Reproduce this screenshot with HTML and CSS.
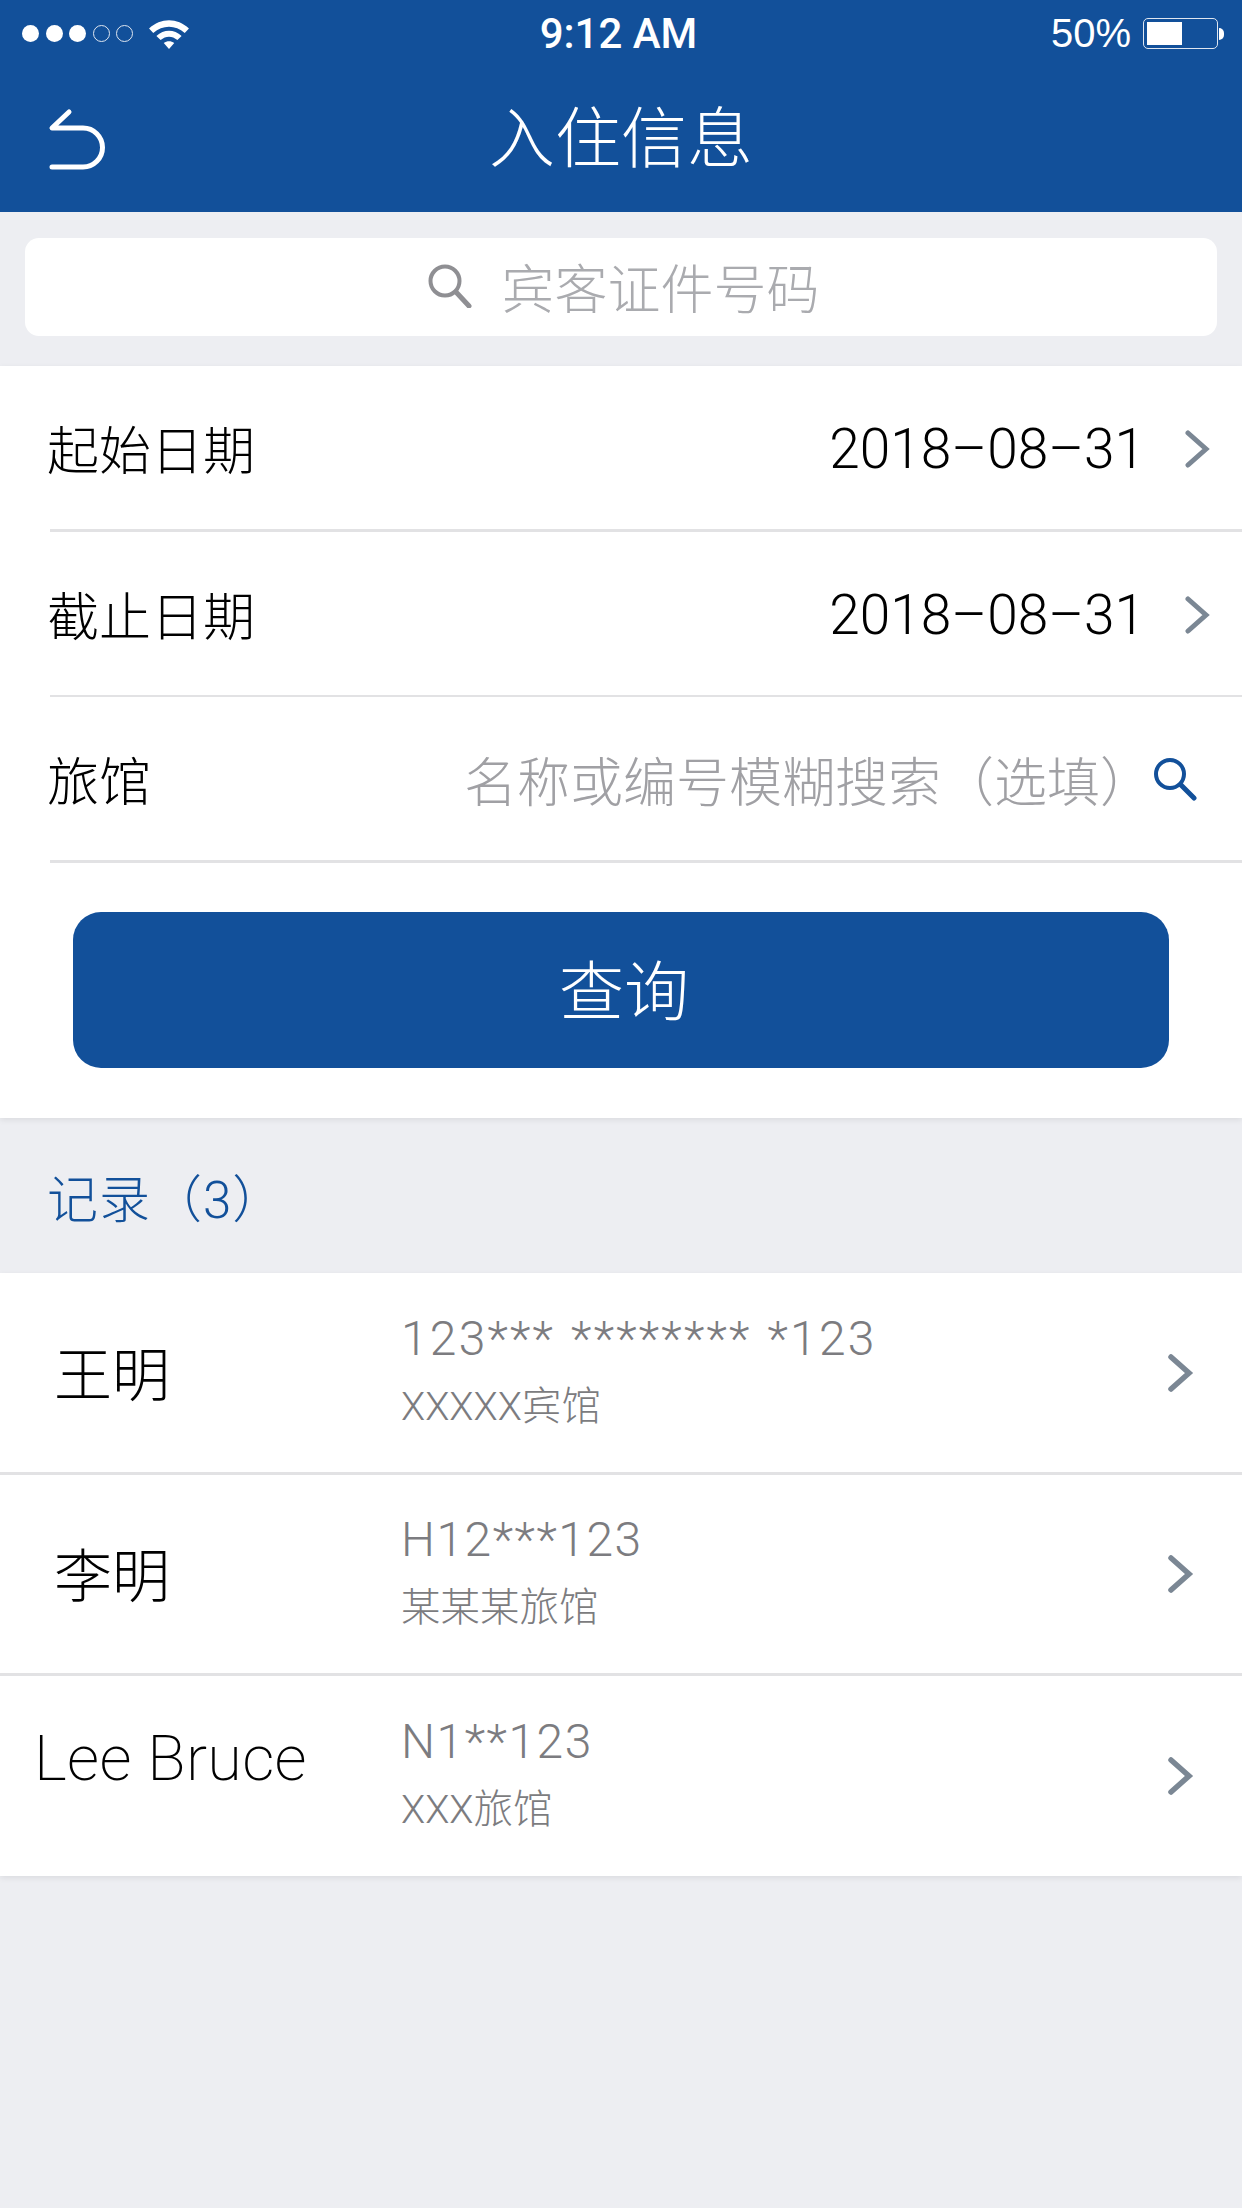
FILE: index.html
```html
<!DOCTYPE html>
<html lang="zh-CN">
<head>
    <meta charset="UTF-8">
    <meta name="viewport" content="width=device-width, initial-scale=1.0">
    <title>入住信息</title>
    <link rel="stylesheet" href="styles.css">
</head>
<body>
    <header class="top">
        <div class="status">
            <div class="status-left">
                <span class="dot"></span><span class="dot"></span><span class="dot"></span>
                <span class="dot empty"></span><span class="dot empty"></span>
                <svg class="wifi" width="42" height="30" viewBox="0 0 40 30" preserveAspectRatio="none">
                    <path d="M1 9.5C12 -1.5 28 -1.5 39 9.5L35 14C26 5.5 14 5.5 5 14Z" fill="#fff"/>
                    <path d="M8 17C15 10 25 10 32 17L28 21C23 16.5 17 16.5 12 21Z" fill="#fff"/>
                    <path d="M15 24C18 21.5 22 21.5 25 24L20 30Z" fill="#fff"/>
                </svg>
            </div>
            <div class="time">9:12 AM</div>
            <div class="status-right">
                <span>50%</span>
                <span class="battery"><span class="battery-fill"></span></span>
                <span class="battery-nub"></span>
            </div>
        </div>
        <div class="nav">
            <svg class="back" width="60" height="62" viewBox="0 0 60 62">
                <path d="M21 4L4 20H35A19.5 19.5 0 0 1 35 59H4" fill="none" stroke="#fff" stroke-width="5" stroke-linecap="round" stroke-linejoin="round"/>
            </svg>
            <h1>入住信息</h1>
        </div>
    </header>

    <div class="search-wrap">
        <div class="search">
            <svg width="44" height="44" viewBox="0 0 44 44">
                <circle cx="17" cy="17" r="14.5" fill="none" stroke="#8f8f93" stroke-width="4"/>
                <path d="M28 28L41 42" fill="none" stroke="#8f8f93" stroke-width="5" stroke-linecap="round"/>
            </svg>
            <span>宾客证件号码</span>
        </div>
    </div>

    <section class="form">
        <div class="form-row">
            <span class="label">起始日期</span>
            <span class="date">2018–08–31</span>
            <svg class="chevron" width="26" height="38" viewBox="0 0 26 38"><path d="M3 3L21 19L3 35" fill="none" stroke="#7b8794" stroke-width="5" stroke-linecap="round"/></svg>
        </div>
        <div class="form-row thin">
            <span class="label">截止日期</span>
            <span class="date">2018–08–31</span>
            <svg class="chevron" width="26" height="38" viewBox="0 0 26 38"><path d="M3 3L21 19L3 35" fill="none" stroke="#7b8794" stroke-width="5" stroke-linecap="round"/></svg>
        </div>
        <div class="form-row">
            <span class="label">旅馆</span>
            <span class="hint">名称或编号模糊搜索（选填）</span>
            <svg class="find" width="44" height="44" viewBox="0 0 44 44">
                <circle cx="17" cy="17" r="14" fill="none" stroke="#12509a" stroke-width="4"/>
                <path d="M28 28L41 41" fill="none" stroke="#12509a" stroke-width="5" stroke-linecap="round"/>
            </svg>
        </div>
        <button class="query">查询</button>
    </section>

    <div class="records-title">记录（3）</div>

    <section class="records">
        <div class="record">
            <div class="name">王明</div>
            <div class="detail">
                <div class="code wide">123*** ******** *123</div>
                <div class="hotel">XXXXX宾馆</div>
            </div>
            <svg width="26" height="38" viewBox="0 0 26 38"><path d="M3 3L21 19L3 35" fill="none" stroke="#7b8794" stroke-width="5.5" stroke-linecap="round"/></svg>
        </div>
        <div class="record">
            <div class="name">李明</div>
            <div class="detail">
                <div class="code">H12***123</div>
                <div class="hotel">某某某旅馆</div>
            </div>
            <svg width="26" height="38" viewBox="0 0 26 38"><path d="M3 3L21 19L3 35" fill="none" stroke="#7b8794" stroke-width="5.5" stroke-linecap="round"/></svg>
        </div>
        <div class="record">
            <div class="name latin">Lee Bruce</div>
            <div class="detail">
                <div class="code">N1**123</div>
                <div class="hotel">XXX旅馆</div>
            </div>
            <svg width="26" height="38" viewBox="0 0 26 38"><path d="M3 3L21 19L3 35" fill="none" stroke="#7b8794" stroke-width="5.5" stroke-linecap="round"/></svg>
        </div>
    </section>
</body>
</html>
```

FILE: styles.css
```css
* {
    box-sizing: border-box;
}
body {
    margin: 0;
    min-height: 2208px;
    background-color: #edeef2;
    font-family: Roboto, "Noto Sans CJK SC", sans-serif;
    font-weight: 300;
    color: #000;
}
.top {
    height: 212px;
    background-color: #12509a;
    color: #fff;
}
.status {
    height: 64px;
    padding: 3px 18px 0 22px;
    display: grid;
    grid-template-columns: 1fr auto 1fr;
    align-items: center;
    font-family: "Liberation Sans", sans-serif;
    font-weight: 400;
    font-size: 40px;
}
.status-left {
    display: flex;
    align-items: center;
    gap: 6.5px;
}
.dot {
    width: 17px;
    height: 17px;
    border-radius: 50%;
    background-color: #fff;
}
.dot.empty {
    background-color: transparent;
    border: 1.5px solid #dfe6f0;
}
.wifi {
    margin-left: 8px;
}
.time {
    margin-right: 9px;
    font-family: Roboto, sans-serif;
    font-weight: 500;
    font-size: 42px;
}
.status-right {
    display: flex;
    align-items: center;
    justify-content: flex-end;
}
.battery {
    width: 75px;
    height: 31px;
    margin-left: 12px;
    padding: 3px;
    border: 1.5px solid #dfe6f0;
    border-radius: 5px;
    display: flex;
}
.battery-fill {
    width: 35px;
    background-color: #fff;
}
.battery-nub {
    width: 5px;
    height: 12px;
    margin-left: 1px;
    background-color: #fff;
    border-radius: 0 6px 6px 0;
}
.nav {
    height: 148px;
    padding-bottom: 10px;
    position: relative;
    display: flex;
    align-items: center;
    justify-content: center;
}
.back {
    position: absolute;
    left: 48px;
    top: 44px;
}
.nav h1 {
    margin: 0;
    font-size: 66px;
    font-weight: 300;
}
.search-wrap {
    padding: 26px 25px;
    height: 154px;
}
.search {
    height: 98px;
    padding: 0 0 3px 5px;
    background-color: #fff;
    border-radius: 14px;
    display: flex;
    align-items: center;
    justify-content: center;
    gap: 30px;
    color: #aaabaf;
    font-size: 53px;
}
.form {
    background-color: #fff;
    padding: 0 0 50px 50px;
    box-shadow: 0 2px 6px rgba(0, 0, 0, 0.08);
    position: relative;
}
.form-row {
    height: 166px;
    display: flex;
    align-items: center;
    border-bottom: 3px solid #e2e2e4;
    padding-right: 31px;
}
.form-row.thin {
    height: 165px;
    border-bottom-width: 2px;
}
.label {
    margin-left: -3px;
    font-size: 52px;
    flex: 1;
}
.date {
    margin-top: 3px;
    font-size: 55px;
}
.chevron {
    margin: 2px 0 0 40px;
}
.hint {
    color: #a0a0a4;
    font-size: 53px;
    white-space: nowrap;
}
.find {
    margin-right: 14px;
}
.query {
    display: block;
    width: 1096px;
    height: 156px;
    margin: 49px 0 0 23px;
    padding: 0 0 6px 6px;
    border: none;
    border-radius: 28px;
    background-color: #12509a;
    color: #fff;
    font-family: inherit;
    font-weight: 300;
    font-size: 65px;
}
.records-title {
    height: 155px;
    padding-left: 47px;
    display: flex;
    align-items: center;
    color: #12509a;
    font-size: 51px;
    letter-spacing: 1px;
}
.records {
    background-color: #fff;
    box-shadow: 0 2px 6px rgba(0, 0, 0, 0.08);
}
.record {
    height: 202px;
    padding-right: 48px;
    display: flex;
    align-items: center;
    border-bottom: 3px solid #e2e2e4;
}
.record:nth-child(2) {
    height: 201px;
}
.record:last-child {
    height: 200px;
    border-bottom: none;
}
.name {
    width: 401px;
    padding: 0 0 4px 54px;
    font-size: 58px;
}
.name.latin {
    padding: 0 0 36px 34px;
    font-size: 63px;
    font-weight: 200;
    letter-spacing: 0.3px;
}
.detail {
    flex: 1;
    color: #7c7c80;
}
.code {
    font-size: 48px;
    letter-spacing: 1.5px;
    line-height: 68px;
}
.code.wide {
    letter-spacing: 2.2px;
    word-spacing: 2px;
}
.hotel {
    font-size: 39.5px;
    line-height: 68px;
}
```
